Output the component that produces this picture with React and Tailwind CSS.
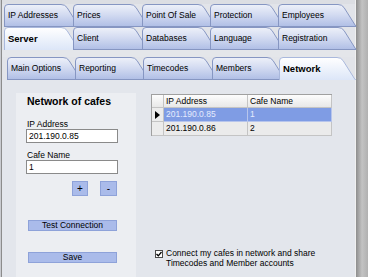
import React from "react";

const row1 = [
  { label: "IP Addresses", w: 69, cls: "w-[69px]" },
  { label: "Prices", w: 69, cls: "w-[69px]" },
  { label: "Point Of Sale", w: 68, cls: "w-[68px]" },
  { label: "Protection", w: 68, cls: "w-[68px]" },
  { label: "Employees", w: 72, cls: "w-[72px]" },
];

const row2 = [
  { label: "Server", w: 69, cls: "w-[69px]", selected: true },
  { label: "Client", w: 69, cls: "w-[69px]" },
  { label: "Databases", w: 68, cls: "w-[68px]" },
  { label: "Language", w: 68, cls: "w-[68px]" },
  { label: "Registration", w: 72, cls: "w-[72px]" },
];

const row3 = [
  { label: "Main Options", w: 68, cls: "w-[68px]" },
  { label: "Reporting", w: 68, cls: "w-[68px]" },
  { label: "Timecodes", w: 69, cls: "w-[69px]" },
  { label: "Members", w: 67, cls: "w-[67px]" },
  { label: "Network", w: 70, cls: "w-[70px]", selected: true },
];

function Tab({ label, w, cls, selected }) {
  const id = "g" + label.replace(/\s/g, "");
  const shape = `M0.5 23 V4 Q0.5 0.5 4 0.5 H${w - 12} Q${w - 8} 0.5 ${w - 6} 3.5 L${w + 6} 22.5`;
  return (
    <div className={`relative h-[23px] shrink-0 ${cls}`}>
      <svg className="absolute left-0 top-0" width={w + 8} height="23">
        <defs>
          <linearGradient id={id} x1="0" y1="0" x2="0" y2="1">
            {selected ? (
              <>
                <stop offset="0" stopColor="#ffffff" />
                <stop offset="1" stopColor="#dce6f8" />
              </>
            ) : (
              <>
                <stop offset="0" stopColor="#eef1f9" />
                <stop offset="0.45" stopColor="#d3dbf1" />
                <stop offset="1" stopColor="#aebde5" />
              </>
            )}
          </linearGradient>
        </defs>
        <path d={shape + " V23 H0.5 Z"} fill={`url(#${id})`} />
        <path
          d={selected ? shape + " L" + (w + 7) + " 23" : shape + " H0.5 Z"}
          fill="none"
          stroke={selected ? "#a9b8dc" : "#8696c2"}
        />
      </svg>
      <span
        className={`relative flex h-full items-center pl-[4px] text-black ${
          selected ? "pt-[2px] text-[9.5px] font-bold" : "text-[8.5px]"
        }`}
      >
        {label}
      </span>
    </div>
  );
}

function TabRow({ tabs, className }) {
  return (
    <div className={`flex h-[23px] ${className}`}>
      {tabs.map((t) => (
        <Tab key={t.label} {...t} />
      ))}
    </div>
  );
}

function BlueButton({ children, className }) {
  return (
    <div
      className={`flex items-center justify-center border border-[#8ea2d9] bg-[#aabbea] text-[8.5px] leading-none text-black ${className}`}
    >
      {children}
    </div>
  );
}

export default function App() {
  return (
    <div className="flex h-[277px] w-[368px] overflow-hidden bg-[#e2e4e9] font-['Liberation_Sans',Arial,sans-serif]">
      <div className="w-[2px] shrink-0 border-l border-[#c9cbd0] bg-[#8c8c8c]" />

      <div className="flex flex-1 flex-col">
        <div className="h-[4px] bg-[#dcdee3]" />
        <TabRow tabs={row1} className="pl-[2px]" />
        <TabRow tabs={row2} className="pl-[2px]" />
        <div className="h-[7px] bg-[#e4e6ea]" />
        <TabRow tabs={row3} className="pl-[5px]" />

        <div className="flex flex-1 bg-[#e3e6ec]">
          <div className="ml-[14px] mt-[13px] flex w-[120px] flex-col bg-[#eceef2] pl-[10px]">
            <div className="ml-[1px] mt-[1px] text-[10.5px] font-bold leading-[14px] text-black">
              Network of cafes
            </div>
            <div className="ml-[1px] mt-[11px] text-[8.5px] leading-[10px] text-black">IP Address</div>
            <div className="flex h-[14px] w-[92px] items-center border border-[#8a8a8a] bg-white pl-[2px] text-[8.5px] text-black">
              201.190.0.85
            </div>
            <div className="ml-[1px] mt-[7px] text-[8.5px] leading-[10px] text-black">Cafe Name</div>
            <div className="flex h-[14px] w-[92px] items-center border border-[#8a8a8a] bg-white pl-[2px] text-[8.5px] text-black">
              1
            </div>
            <div className="ml-[46px] mt-[7px] flex gap-[12px]">
              <BlueButton className="h-[15px] w-[16px] text-[10px]">+</BlueButton>
              <BlueButton className="h-[15px] w-[17px] text-[10px]">-</BlueButton>
            </div>
            <BlueButton className="ml-[2px] mt-[24px] h-[11px] w-[89px]">Test Connection</BlueButton>
            <BlueButton className="ml-[2px] mt-[21px] h-[11px] w-[89px]">Save</BlueButton>
          </div>

          <div className="ml-[15px] mt-[14px] flex flex-col">
            <div className="flex flex-col border-l border-t border-[#a0a0a0] text-[8.5px] text-black">
              <div className="flex h-[13px]">
                <div className="w-[12px] border-b border-r border-[#c4c4c4] bg-gradient-to-b from-[#fdfdfd] to-[#e8e8e8]" />
                <div className="flex w-[84px] items-center border-b border-r border-[#c4c4c4] bg-gradient-to-b from-[#fdfdfd] to-[#e8e8e8] pl-[2px]">
                  IP Address
                </div>
                <div className="flex w-[84px] items-center border-b border-r border-[#c4c4c4] bg-gradient-to-b from-[#fdfdfd] to-[#e8e8e8] pl-[2px]">
                  Cafe Name
                </div>
              </div>
              <div className="flex h-[14px]">
                <div className="flex w-[12px] items-center justify-center border-b border-r border-[#c4c4c4] bg-[#ececec]">
                  <svg width="5" height="8" viewBox="0 0 5 8">
                    <path d="M0 0 L5 4 L0 8 Z" fill="#000" />
                  </svg>
                </div>
                <div className="flex w-[84px] items-center border-b border-r border-[#b7c5ec] bg-[#7f9ce4] pl-[2px] text-[#e4ebfd]">
                  201.190.0.85
                </div>
                <div className="flex w-[84px] items-center border-b border-r border-[#b7c5ec] bg-[#7f9ce4] pl-[2px] text-[#e4ebfd]">
                  1
                </div>
              </div>
              <div className="flex h-[14px]">
                <div className="w-[12px] border-b border-r border-[#c4c4c4] bg-[#ececec]" />
                <div className="flex w-[84px] items-center border-b border-r border-[#c4c4c4] bg-[#ebebeb] pl-[2px]">
                  201.190.0.86
                </div>
                <div className="flex w-[84px] items-center border-b border-r border-[#c4c4c4] bg-[#ebebeb] pl-[2px]">
                  2
                </div>
              </div>
            </div>

            <div className="ml-[4px] mt-[113px] flex items-start gap-[3px]">
              <div className="mt-[1px] flex h-[8px] w-[8px] items-center justify-center border border-[#4a4a4a] bg-white">
                <svg width="6" height="6" viewBox="0 0 6 6">
                  <path d="M0.5 3 L2.3 4.8 L5.5 1" fill="none" stroke="#000" strokeWidth="1.3" />
                </svg>
              </div>
              <div className="text-[8.5px] leading-[9.5px] text-black">
                Connect my cafes in network and share
                <br />
                Timecodes and Member accounts
              </div>
            </div>
          </div>
        </div>
      </div>

      <div className="w-[13px] shrink-0 border-l border-[#f0f0f0] bg-gradient-to-r from-[#8e8e8e] via-[#c3c3c3] to-[#b1b1b1]" />
    </div>
  );
}
